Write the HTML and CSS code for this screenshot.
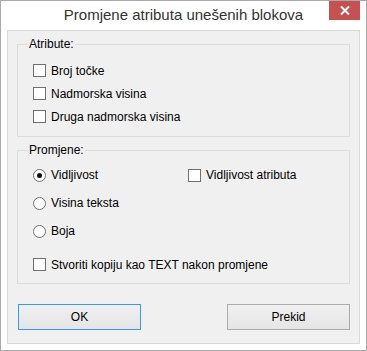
FILE: index.html
```html
<!DOCTYPE html>
<html lang="hr">

<head>
    <meta charset="UTF-8">
    <meta name="viewport" content="width=device-width, initial-scale=1.0">
    <title>Promjene atributa unešenih blokova</title>
    <link rel="stylesheet" href="styles.css">
</head>

<body>
    <div class="window">
        <div class="titlebar">
            <span></span>
            <div class="title">Promjene atributa unešenih blokova</div>
            <button class="close" title="Zatvori">
                <svg width="10" height="9" viewBox="0 0 10 9">
                    <path d="M1 0.5 L9 8.5 M9 0.5 L1 8.5" stroke="#fff" stroke-width="2" fill="none"/>
                </svg>
            </button>
        </div>

        <div class="client">
            <fieldset class="group group-attr">
                <legend>Atribute:</legend>
                <label class="option"><input type="checkbox"> Broj točke</label>
                <label class="option"><input type="checkbox"> Nadmorska visina</label>
                <label class="option"><input type="checkbox"> Druga nadmorska visina</label>
            </fieldset>

            <fieldset class="group group-change">
                <legend>Promjene:</legend>
                <div class="grid">
                    <label class="option row"><input type="radio" name="change" checked> Vidljivost</label>
                    <label class="option row"><input type="checkbox"> Vidljivost atributa</label>
                    <label class="option row"><input type="radio" name="change"> Visina teksta</label>
                    <span></span>
                    <label class="option row"><input type="radio" name="change"> Boja</label>
                    <span></span>
                </div>
                <label class="option copy"><input type="checkbox"> Stvoriti kopiju kao TEXT nakon promjene</label>
            </fieldset>

            <div class="buttons">
                <button class="button default">OK</button>
                <button class="button">Prekid</button>
            </div>
        </div>
    </div>
</body>

</html>
```

FILE: styles.css
```css
html, body {
    margin: 0;
    padding: 0;
}

body {
    font-family: "Liberation Sans", Arial, sans-serif;
    font-size: 12px;
    color: #000;
    background-color: #fff;
}

.window {
    width: 367px;
    height: 351px;
    box-sizing: border-box;
    border: 1px solid #aaaaaa;
    background-color: #fff;
    padding: 0 6px 6px 6px;
    display: flex;
    flex-direction: column;
}

.titlebar {
    height: 29px;
    display: grid;
    grid-template-columns: 1fr auto 1fr;
    align-items: start;
}

.title {
    font-size: 15px;
    color: #333;
    line-height: 18px;
    padding-top: 5px;
}

.close {
    justify-self: end;
    width: 31px;
    height: 19px;
    border: none;
    padding: 0;
    margin: 0;
    background-color: #c75050;
    display: flex;
    align-items: center;
    justify-content: center;
}

.client {
    flex: 1;
    border: 1px solid #d9d9d9;
    background-color: #f0f0f0;
    padding: 0 9px;
}

.group {
    margin: 7px 0 0 0;
    padding: 0 10px 0 15px;
    border: 1px solid #dcdcdc;
    min-width: 0;
}

.group legend {
    padding: 0 1px;
    margin-left: -5px;
    line-height: 13px;
}

.group-attr {
    height: 99px;
    box-sizing: border-box;
    padding-top: 8px;
}

.group-change {
    height: 140px;
    box-sizing: border-box;
    margin-top: 7px;
    padding-top: 4px;
}

.option {
    display: flex;
    align-items: center;
    height: 23px;
    gap: 5px;
    white-space: nowrap;
}

.option input {
    appearance: none;
    -webkit-appearance: none;
    margin: 0;
    width: 13px;
    height: 13px;
    box-sizing: border-box;
    border: 1px solid #707070;
    background-color: #fff;
    flex: none;
}

.option input[type="radio"] {
    border-radius: 50%;
    display: flex;
    align-items: center;
    justify-content: center;
}

.option input[type="radio"]:checked::after {
    content: "";
    width: 5px;
    height: 5px;
    border-radius: 50%;
    background-color: #111;
}

.grid {
    display: grid;
    grid-template-columns: 155px 1fr;
}

.row {
    height: 28px;
}

.copy {
    margin-top: 8px;
}

.buttons {
    display: flex;
    justify-content: space-between;
    margin-top: 20px;
    padding-left: 1px;
}

.button {
    width: 123px;
    height: 26px;
    border: 1px solid #acacac;
    background: linear-gradient(#f0f0f0, #e5e5e5);
    font-family: "Liberation Sans", Arial, sans-serif;
    font-size: 12px;
    color: #000;
    padding: 0;
    margin: 0;
}

.button.default {
    border-color: #3399ff;
}
```
